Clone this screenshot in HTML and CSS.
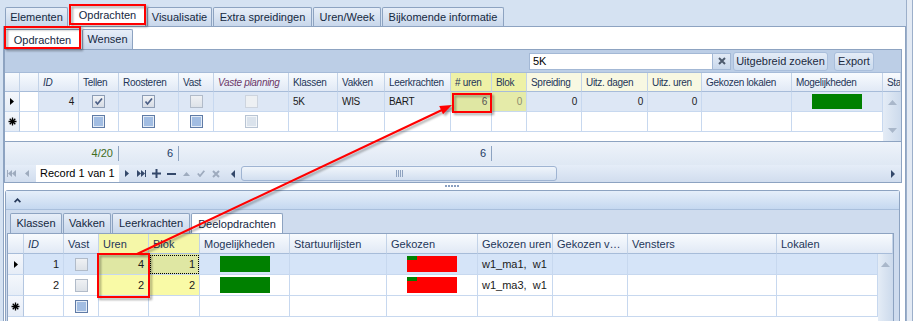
FILE: index.html
```html
<!DOCTYPE html>
<html lang="nl">
  <head>
    <meta charset="UTF-8" />
    <title>Opdrachten</title>
    <link rel="stylesheet" href="styles.css">
  </head>
  <body>
    <div class="window">
      <div class="main">
        <div class="tabstrip main-tabs">
          <div class="tab">Elementen</div>
          <div class="tab active">Opdrachten</div>
          <div class="tab">Visualisatie</div>
          <div class="tab">Extra spreidingen</div>
          <div class="tab">Uren/Week</div>
          <div class="tab">Bijkomende informatie</div>
        </div>

        <div class="page">
          <div class="tabstrip sub-tabs">
            <div class="tab active">Opdrachten</div>
            <div class="tab">Wensen</div>
          </div>

          <div class="gridctl">
            <div class="findpanel">
              <div class="search">5K</div>
              <div class="clear">
                <svg width="8" height="8" viewBox="0 0 8 8"><path d="M1 1L7 7M7 1L1 7" stroke="#4e5b6e" stroke-width="2"/></svg>
              </div>
              <div class="btn wide">Uitgebreid zoeken</div>
              <div class="btn">Export</div>
            </div>

            <div class="ugrid">
              <div class="hd ind"></div>
              <div class="hd"></div>
              <div class="hd it">ID</div>
              <div class="hd">Tellen</div>
              <div class="hd">Roosteren</div>
              <div class="hd">Vast</div>
              <div class="hd it plum">Vaste planning</div>
              <div class="hd">Klassen</div>
              <div class="hd">Vakken</div>
              <div class="hd">Leerkrachten</div>
              <div class="hd yel"># uren</div>
              <div class="hd yel">Blok</div>
              <div class="hd cream">Spreiding</div>
              <div class="hd cream">Uitz. dagen</div>
              <div class="hd cream">Uitz. uren</div>
              <div class="hd">Gekozen lokalen</div>
              <div class="hd">Mogelijkheden</div>
              <div class="hd">Sta</div>

              <div class="vscroll">
                <svg width="9" height="5" viewBox="0 0 9 5"><path d="M0 5L4.5 0L9 5Z" fill="#a9b7ca"/></svg>
                <svg width="9" height="5" viewBox="0 0 9 5"><path d="M0 0L4.5 5L9 0Z" fill="#a9b7ca"/></svg>
              </div>

              <!-- focused row -->
              <div class="cell ind"><svg width="4" height="7" viewBox="0 0 4 7"><path d="M0 0L4 3.5L0 7Z" fill="#000"/></svg></div>
              <div class="cell"></div>
              <div class="cell num foc">4</div>
              <div class="cell mid foc"><span class="chk on"><svg width="9" height="9" viewBox="0 0 9 9"><path d="M1.5 4.5L3.5 7L8 1.5" fill="none" stroke="#4a5e85" stroke-width="1.7"/></svg></span></div>
              <div class="cell mid foc"><span class="chk on"><svg width="9" height="9" viewBox="0 0 9 9"><path d="M1.5 4.5L3.5 7L8 1.5" fill="none" stroke="#4a5e85" stroke-width="1.7"/></svg></span></div>
              <div class="cell mid foc"><span class="chk off"></span></div>
              <div class="cell mid foc"><span class="chk dim"></span></div>
              <div class="cell foc">5K</div>
              <div class="cell foc">WIS</div>
              <div class="cell foc">BART</div>
              <div class="cell num yelfoc grey">6</div>
              <div class="cell num yelfoc2 pale">0</div>
              <div class="cell num foc">0</div>
              <div class="cell num foc">0</div>
              <div class="cell num foc">0</div>
              <div class="cell foc"></div>
              <div class="cell mid foc"><span class="bar green"></span></div>

              <!-- new row -->
              <div class="cell ind"><svg width="9" height="9" viewBox="0 0 9 9"><path d="M4.5 0.5V8.5M0.5 4.5H8.5M1.7 1.7L7.3 7.3M7.3 1.7L1.7 7.3" stroke="#000" stroke-width="1.3"/></svg></div>
              <div class="cell"></div>
              <div class="cell"></div>
              <div class="cell mid"><span class="chk new"></span></div>
              <div class="cell mid"><span class="chk new"></span></div>
              <div class="cell mid"><span class="chk new"></span></div>
              <div class="cell mid"><span class="chk newdim"></span></div>
              <div class="cell"></div>
              <div class="cell"></div>
              <div class="cell"></div>
              <div class="cell"></div>
              <div class="cell"></div>
              <div class="cell"></div>
              <div class="cell"></div>
              <div class="cell"></div>
              <div class="cell"></div>
              <div class="cell"></div>

              <div class="filler"></div>
            </div>

            <div class="summary">
              <span></span>
              <span class="sum green-text">4/20</span>
              <span class="sum">6</span>
              <span></span>
              <span class="sum">6</span>
            </div>

            <div class="navbar">
              <div class="nb w12"><svg width="9" height="7" viewBox="0 0 9 7"><path d="M0 0H1V7H0ZM1 3.5L5 0V7ZM5 3.5L9 0V7Z" fill="#9eabbe"/></svg></div>
              <div class="nb w19"><svg width="4" height="7" viewBox="0 0 4 7"><path d="M4 0L0 3.5L4 7Z" fill="#9eabbe"/></svg></div>
              <div class="record">Record 1 van 1</div>
              <div class="nb w16"><svg width="4" height="7" viewBox="0 0 4 7"><path d="M0 0L4 3.5L0 7Z" fill="#34486a"/></svg></div>
              <div class="nb w13"><svg width="9" height="7" viewBox="0 0 9 7"><path d="M0 0L4 3.5L0 7ZM4 0L8 3.5L4 7ZM8 0H9V7H8Z" fill="#34486a"/></svg></div>
              <div class="nb w16"><svg width="9" height="9" viewBox="0 0 9 9"><path d="M4.5 0V9M0 4.5H9" stroke="#34486a" stroke-width="2"/></svg></div>
              <div class="nb w14"><svg width="9" height="2" viewBox="0 0 9 2"><path d="M0 1H9" stroke="#34486a" stroke-width="2"/></svg></div>
              <div class="nb w17"><svg width="7" height="4" viewBox="0 0 7 4"><path d="M0 4L3.5 0L7 4Z" fill="#9eabbe"/></svg></div>
              <div class="nb w11"><svg width="8" height="7" viewBox="0 0 8 7"><path d="M0.8 3.5L3 6L7.3 0.8" fill="none" stroke="#9eabbe" stroke-width="1.8"/></svg></div>
              <div class="nb w20"><svg width="8" height="8" viewBox="0 0 8 8"><path d="M1 1L7 7M7 1L1 7" stroke="#9eabbe" stroke-width="2"/></svg></div>
              <div class="hscroll">
                <div class="nb w14"><svg width="4" height="8" viewBox="0 0 4 8"><path d="M4 0L0 4L4 8Z" fill="#34486a"/></svg></div>
                <div class="thumb"><span class="grip"></span></div>
                <div class="spacer"></div>
                <div class="nb w17"><svg width="4" height="8" viewBox="0 0 4 8"><path d="M0 0L4 4L0 8Z" fill="#34486a"/></svg></div>
              </div>
            </div>
          </div>

          <div class="splitter"><span></span><span></span><span></span><span></span><span></span></div>

          <div class="detail">
            <div class="detail-head">
              <svg width="7" height="5" viewBox="0 0 7 5"><path d="M0.6 4.2L3.5 1.2L6.4 4.2" fill="none" stroke="#25385a" stroke-width="1.7"/></svg>
            </div>
            <div class="tabstrip detail-tabs">
              <div class="tab">Klassen</div>
              <div class="tab">Vakken</div>
              <div class="tab">Leerkrachten</div>
              <div class="tab active">Deelopdrachten</div>
            </div>

            <div class="lgrid">
              <div class="hd ind"></div>
              <div class="hd it">ID</div>
              <div class="hd">Vast</div>
              <div class="hd yel">Uren</div>
              <div class="hd yel">Blok</div>
              <div class="hd">Mogelijkheden</div>
              <div class="hd">Startuurlijsten</div>
              <div class="hd">Gekozen</div>
              <div class="hd">Gekozen uren</div>
              <div class="hd">Gekozen v…</div>
              <div class="hd">Vensters</div>
              <div class="hd span2">Lokalen</div>

              <div class="vscroll">
                <svg width="9" height="5" viewBox="0 0 9 5"><path d="M0 5L4.5 0L9 5Z" fill="#a9b7ca"/></svg>
              </div>

              <div class="cell ind"><svg width="4" height="7" viewBox="0 0 4 7"><path d="M0 0L4 3.5L0 7Z" fill="#000"/></svg></div>
              <div class="cell num foc">1</div>
              <div class="cell mid foc"><span class="chk off"></span></div>
              <div class="cell num yelfoc">4</div>
              <div class="cell num yelfoc focus">1</div>
              <div class="cell mid foc"><span class="bar green"></span></div>
              <div class="cell foc"></div>
              <div class="cell mid foc"><span class="bar red"></span></div>
              <div class="cell foc">w1_ma1,&nbsp; w1</div>
              <div class="cell foc"></div>
              <div class="cell foc"></div>
              <div class="cell foc"></div>

              <div class="cell ind"></div>
              <div class="cell num">2</div>
              <div class="cell mid"><span class="chk off"></span></div>
              <div class="cell num yelrow">2</div>
              <div class="cell num yelrow">2</div>
              <div class="cell mid"><span class="bar green"></span></div>
              <div class="cell"></div>
              <div class="cell mid"><span class="bar red"></span></div>
              <div class="cell">w1_ma3,&nbsp; w1</div>
              <div class="cell"></div>
              <div class="cell"></div>
              <div class="cell"></div>

              <div class="cell ind"><svg width="9" height="9" viewBox="0 0 9 9"><path d="M4.5 0.5V8.5M0.5 4.5H8.5M1.7 1.7L7.3 7.3M7.3 1.7L1.7 7.3" stroke="#000" stroke-width="1.3"/></svg></div>
              <div class="cell"></div>
              <div class="cell mid"><span class="chk new"></span></div>
              <div class="cell"></div>
              <div class="cell"></div>
              <div class="cell"></div>
              <div class="cell"></div>
              <div class="cell"></div>
              <div class="cell"></div>
              <div class="cell"></div>
              <div class="cell"></div>
              <div class="cell"></div>

              <div class="filler"></div>
            </div>
          </div>
        </div>
      </div>
      <div class="edge"></div>
    </div>

    <!-- annotations drawn over the screenshot -->
    <svg class="annot" width="913" height="321" viewBox="0 0 913 321">
      <defs>
        <filter id="shade" x="-20%" y="-20%" width="140%" height="140%">
          <feDropShadow dx="2" dy="2" stdDeviation="1.2" flood-color="#000" flood-opacity="0.35"/>
        </filter>
      </defs>
      <g filter="url(#shade)" fill="none" stroke="#f00" stroke-width="2">
        <rect x="70" y="5" width="75" height="19"/>
        <rect x="5" y="27" width="75" height="21"/>
        <rect x="453" y="94" width="38" height="18"/>
        <rect x="98" y="254" width="51" height="43"/>
        <line x1="137" y1="254" x2="442" y2="110"/>
        <path d="M452 105L443 114.2L439.2 106Z" fill="#f00" stroke="none"/>
      </g>
    </svg>
  </body>
</html>
```

FILE: styles.css
```css
* {
  box-sizing: border-box;
}

body {
  margin: 0;
  width: 913px;
  height: 321px;
  overflow: hidden;
  position: relative;
  background: #d5e2f2;
  font-family: "Liberation Sans", Arial, sans-serif;
  font-size: 11px;
  color: #1b2a40;
}

.window {
  display: flex;
  height: 321px;
}

.main {
  width: 906px;
  display: flex;
  flex-direction: column;
}

.edge {
  flex: 1;
  background: #e3eaf4;
  border-left: 1px solid #9cafca;
  border-right: 1px solid #9cafca;
}

/* tabs */

.tabstrip {
  display: grid;
  column-gap: 1px;
  align-items: end;
}

.tab {
  height: 19px;
  line-height: 18px;
  text-align: center;
  white-space: nowrap;
  color: #15283f;
  border: 1px solid #8da3c1;
  border-bottom: none;
  border-radius: 2px 2px 0 0;
  background: linear-gradient(#e7eef8, #c8d7eb);
}

.tab.active {
  height: 22px;
  line-height: 20px;
  background: #fff;
}

.main-tabs {
  height: 26px;
  padding-left: 5px;
  grid-template-columns: 63px 77px 65px 99px 68px 122px;
}

.sub-tabs {
  height: 22px;
  grid-template-columns: 77px 51px;
  background: #fff;
}

.sub-tabs .tab {
  height: 20px;
}

.detail-tabs {
  height: 23px;
  padding-left: 4px;
  grid-template-columns: 52px 48px 78px 92px;
}

.detail-tabs .tab {
  height: 20px;
}

/* page */

.page {
  flex: 1;
  margin-left: 3px;
  border: 1px solid #8da3c1;
  border-bottom: none;
  background: #fff;
  display: flex;
  flex-direction: column;
  min-height: 0;
}

.gridctl {
  margin-right: 3px;
  border: 1px solid #8da3c1;
  display: flex;
  flex-direction: column;
}

.findpanel {
  height: 23px;
  display: flex;
  align-items: center;
  justify-content: flex-end;
  padding-right: 27px;
  background: #bccee6;
  border-bottom: 1px solid #a6bbd8;
}

.search {
  width: 184px;
  height: 17px;
  line-height: 15px;
  padding-left: 3px;
  background: #fff;
  border: 1px solid #a3b8d5;
  color: #000;
}

.clear {
  width: 18px;
  height: 17px;
  display: flex;
  align-items: center;
  justify-content: center;
  background: linear-gradient(#e3ebf6, #c9d8ec);
  border: 1px solid #a3b8d5;
  border-left: none;
  margin-right: 2px;
}

.btn {
  height: 19px;
  line-height: 17px;
  width: 40px;
  text-align: center;
  white-space: nowrap;
  overflow: hidden;
  color: #1b2a40;
  border: 1px solid #a9bedb;
  border-radius: 3px;
  background: linear-gradient(#e4ecf7, #c9d9ed);
}

.btn.wide {
  width: 95px;
  margin-right: 6px;
}

/* grids */

.ugrid {
  display: grid;
  grid-template-columns: 15px 19px 40px 40px 60px 35px 75px 49px 47px 66px 41px 35px 55px 66px 54px 90px 91px 1fr;
  grid-template-rows: 19px 20px 20px 9px;
  font-size: 10px;
  letter-spacing: -0.3px;
}

.lgrid {
  flex: 1;
  margin: 0 5px 0 1px;
  border: 1px solid #8da3c1;
  border-bottom: none;
  background: #fff;
  display: grid;
  grid-template-columns: 16px 40px 35px 50px 51px 90px 97px 91px 75px 75px 149px 101px 1fr;
  grid-template-rows: 20px 21px 21px 21px 1fr;
}

.hd {
  padding: 0 4px;
  white-space: nowrap;
  overflow: hidden;
  display: flex;
  align-items: center;
  color: #1e3658;
  background: linear-gradient(#f8fbfe, #e1e9f5);
  border-right: 1px solid #c3d3e8;
  border-bottom: 1px solid #a7bcd9;
}

.hd.it {
  font-style: italic;
}

.hd.plum {
  color: #6b3868;
}

.hd.yel {
  background: #eef1a6;
}

.lgrid .hd.yel {
  background: #f5f7a8;
}

.hd.cream {
  background: #f8f8e2;
}

.hd.span2 {
  grid-column: span 2;
}

.cell {
  padding: 0 4px;
  white-space: nowrap;
  overflow: hidden;
  display: flex;
  align-items: center;
  color: #1a1a1a;
  border-right: 1px solid #c7d8ef;
  border-bottom: 1px solid #c7d8ef;
}

.cell.ind {
  justify-content: center;
  padding: 0;
  background: linear-gradient(#f4f7fc, #e6edf7);
  border-right-color: #b3c6e0;
}

.num {
  justify-content: flex-end;
}

.mid {
  justify-content: center;
}

.foc {
  background: #dde7f5;
}

.lgrid .foc {
  background: #d5e4f8;
}

.yelfoc {
  background: #dfe7a3;
}

.yelfoc2 {
  background: #e5eba9;
}

.yelrow {
  background: #f9faa6;
}

.focus {
  outline: 1px dotted #000;
  outline-offset: -2px;
}

.grey {
  color: #555;
}

.pale {
  color: #8d8d6e;
}

.filler {
  grid-column: 1 / 18;
  grid-row: 4;
  background: #fff;
}

.lgrid .filler {
  grid-column: 1 / 13;
  grid-row: 5;
}

.vscroll {
  grid-column: 18;
  grid-row: 2 / 5;
  display: flex;
  flex-direction: column;
  align-items: center;
  justify-content: space-between;
  padding: 8px 0 8px;
  background: linear-gradient(to right, #e4ecf6, #ccdaec);
}

.lgrid .vscroll {
  grid-column: 13;
  grid-row: 2 / 6;
  justify-content: flex-start;
}

/* checkboxes */

.chk {
  width: 13px;
  height: 13px;
  display: flex;
  align-items: center;
  justify-content: center;
  border: 1px solid #8d9db5;
  background: linear-gradient(#f1f3f6, #d6dce5);
}

.chk.off {
  border-color: #b1bbc9;
  background: linear-gradient(#eff1f4, #dde2e8);
}

.chk.dim {
  border-color: #cdd4de;
  background: #edf0f3;
}

.chk.new {
  border-color: #5f7ba6;
  background: #a2bde2;
  box-shadow: inset 0 0 0 1px #e4ecf6;
}

.chk.newdim {
  border-color: #b8c4d3;
  background: #dbe3ec;
  box-shadow: inset 0 0 0 1px #f3f6f9;
}

.bar {
  width: 50px;
  height: 15px;
}

.lgrid .bar {
  height: 16px;
}

.bar.green {
  background: #008000;
}

.bar.red {
  background: #f00;
  position: relative;
}

.bar.red::before {
  content: "";
  position: absolute;
  left: 0;
  top: 0;
  width: 10px;
  height: 4px;
  background: #008000;
}

/* footer + navigator */

.summary {
  height: 24px;
  display: grid;
  grid-template-columns: 74px 40px 60px 272px 41px;
  align-items: center;
  border-top: 1px solid #8da3c1;
  background: linear-gradient(#eef3fa, #dfe8f4);
}

.sum {
  height: 15px;
  line-height: 15px;
  text-align: right;
  padding-right: 5px;
  color: #223a66;
  border-right: 1px solid #8da3c1;
}

.green-text {
  color: #3f6d1e;
}

.navbar {
  height: 17px;
  display: flex;
  background: linear-gradient(#e5edf8, #d1ddee);
}

.nb {
  flex: none;
  display: flex;
  align-items: center;
  justify-content: center;
}

.w11 { width: 11px; }
.w12 { width: 12px; }
.w13 { width: 13px; }
.w14 { width: 14px; }
.w16 { width: 16px; }
.w17 { width: 17px; }
.w19 { width: 19px; }
.w20 { width: 20px; }

.record {
  width: 83px;
  padding-left: 4px;
  line-height: 17px;
  background: #fff;
  color: #000;
}

.hscroll {
  flex: 1;
  display: flex;
  align-items: center;
}

.thumb {
  width: 316px;
  height: 15px;
  margin-left: 1px;
  display: flex;
  align-items: center;
  justify-content: center;
  border: 1px solid #9fb4d2;
  border-radius: 3px;
  background: linear-gradient(#f0f5fb, #d2dff0);
}

.grip {
  width: 7px;
  height: 7px;
  background: repeating-linear-gradient(to right, #8ea2bf 0 1px, transparent 1px 2px);
}

.spacer {
  flex: 1;
}

/* splitter + detail panel */

.splitter {
  height: 7px;
  display: flex;
  justify-content: center;
  gap: 1px;
  padding: 2px 5px 0 0;
}

.splitter span {
  width: 2px;
  height: 2px;
  background: #8a9fc0;
}

.detail {
  flex: 1;
  margin: 0 5px 0 1px;
  border: 1px solid #8da3c1;
  border-bottom: none;
  border-radius: 3px 3px 0 0;
  background: #cfdcee;
  display: flex;
  flex-direction: column;
}

.detail-head {
  height: 19px;
  padding-left: 8px;
  display: flex;
  align-items: center;
  background: linear-gradient(#e6effa, #c5d8f0);
  border-bottom: 1px solid #a9bfdc;
}

.annot {
  position: absolute;
  top: 0;
  left: 0;
  pointer-events: none;
}
```
